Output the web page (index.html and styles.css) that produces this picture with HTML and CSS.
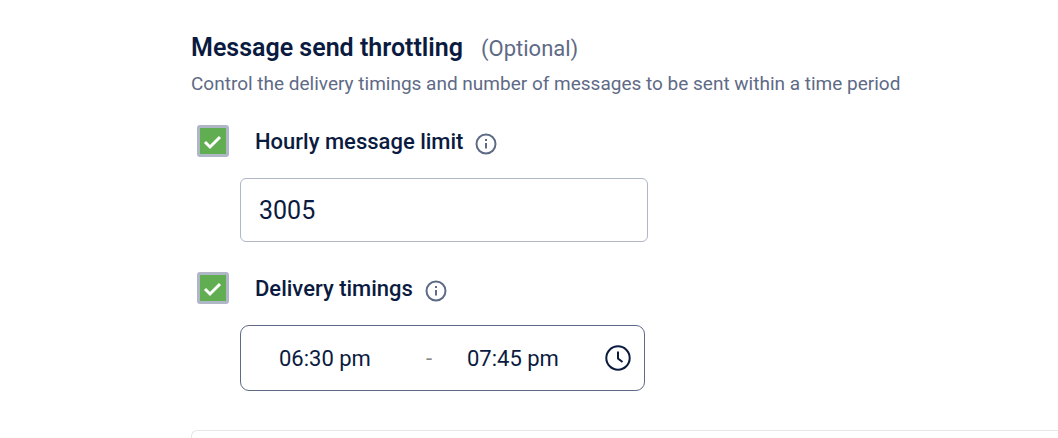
FILE: index.html
```html
<!DOCTYPE html>
<html lang="en">
<head>
<meta charset="utf-8">
<meta name="viewport" content="width=device-width, initial-scale=1">
<title>Message send throttling</title>
<link rel="stylesheet" href="styles.css">
</head>
<body>
<main class="page">
  <section class="throttling">
    <header class="heading">
      <h2 class="title">Message send throttling</h2>
      <span class="optional">(Optional)</span>
    </header>
    <p class="description">Control the delivery timings and number of messages to be sent within a time period</p>

    <div class="option">
      <input class="check" type="checkbox" id="limit-on" checked>
      <label class="label" for="limit-on">Hourly message limit</label>
      <button class="info" type="button" aria-label="About the hourly message limit">
        <svg viewBox="0 0 22 22" width="22" height="22"><circle cx="11" cy="11" r="9.5"/><path d="M11 10v5.5"/><path d="M11 6v2"/></svg>
      </button>
    </div>
    <input class="limit" type="text" inputmode="numeric" value="3005" aria-label="Hourly message limit">

    <div class="option">
      <input class="check" type="checkbox" id="timings-on" checked>
      <label class="label" for="timings-on">Delivery timings</label>
      <button class="info" type="button" aria-label="About delivery timings">
        <svg viewBox="0 0 22 22" width="22" height="22"><circle cx="11" cy="11" r="9.5"/><path d="M11 10v5.5"/><path d="M11 6v2"/></svg>
      </button>
    </div>
    <div class="range">
      <input class="time" type="text" value="06:30 pm" aria-label="Start time">
      <span class="dash">-</span>
      <input class="time" type="text" value="07:45 pm" aria-label="End time">
      <button class="clock" type="button" aria-label="Choose a time">
        <svg viewBox="0 0 26 26" width="26" height="26"><circle cx="13" cy="13" r="11.7"/><path d="M13 6.5v7l4.500 3.500"/></svg>
      </button>
    </div>
  </section>
  <section class="next-card"></section>
</main>
</body>
</html>
```
FILE: styles.css
```css
* {
  box-sizing: border-box;
}

body {
  margin: 0;
  background: #fff;
  color: #0b1b3f;
  font-family: Roboto, sans-serif;
}

.page {
  padding: 32px 0 0 191px;
  overflow: hidden;
}

.heading {
  display: flex;
  align-items: baseline;
  gap: 18px;
}

.title {
  margin: 0;
  font-size: 25px;
  font-weight: 600;
  line-height: 31px;
}

.optional {
  color: #5e6a86;
  font-size: 22px;
  line-height: 31px;
}

.description {
  margin: 8px 0 29px;
  color: #5e6a86;
  font-size: 19px;
  line-height: 24px;
}

.option {
  display: flex;
  align-items: center;
  padding-left: 6px;
}

.check {
  appearance: none;
  width: 32px;
  height: 32px;
  margin: 0 26px 0 0;
  border: 3px solid #afb6c6;
  border-radius: 3px;
  background: #fff;
}

.check:checked {
  background: #61ad52 url("data:image/svg+xml,%3Csvg xmlns='http://www.w3.org/2000/svg' viewBox='0 0 26 26'%3E%3Cpath d='M5 14l5 5L20 9' fill='none' stroke='white' stroke-width='3'/%3E%3C/svg%3E") center / 26px 26px no-repeat;
}

.label {
  padding-top: 2px;
  font-size: 22px;
  font-weight: 500;
  line-height: 30px;
}

.info,
.clock {
  display: flex;
  padding: 0;
  border: 0;
  background: none;
  color: #5e6a86;
}

.info {
  margin: 6px 0 0 12px;
}

.info svg,
.clock svg {
  fill: none;
  stroke: currentColor;
  stroke-width: 2;
}

.limit,
.range {
  display: flex;
  max-width: 408px;
  width: 100%;
  height: 64px;
  margin: 21px 0 30px 49px;
  border: 1px solid #afb6c6;
  border-radius: 6px;
  background: #fff;
}

.limit {
  padding: 0 18px;
  color: inherit;
  font-family: inherit;
  font-size: 25px;
}

.range {
  align-items: center;
  max-width: 405px;
  height: 66px;
  margin-bottom: 39px;
  padding: 0 13px 0 38px;
  border-color: #5e6a86;
  border-radius: 9px;
}

.time {
  width: 112px;
  padding: 0;
  border: 0;
  background: none;
  color: inherit;
  font-family: inherit;
  font-size: 22px;
}

.dash {
  width: 76px;
  padding-left: 35px;
  color: #8a8a8a;
  font-size: 22px;
}

.clock {
  margin-left: auto;
  color: #0b1b3f;
}

.next-card {
  height: 8px;
  border: 1px solid #e6e6e6;
  border-width: 1px 0 0 1px;
  border-top-left-radius: 6px;
}
```
